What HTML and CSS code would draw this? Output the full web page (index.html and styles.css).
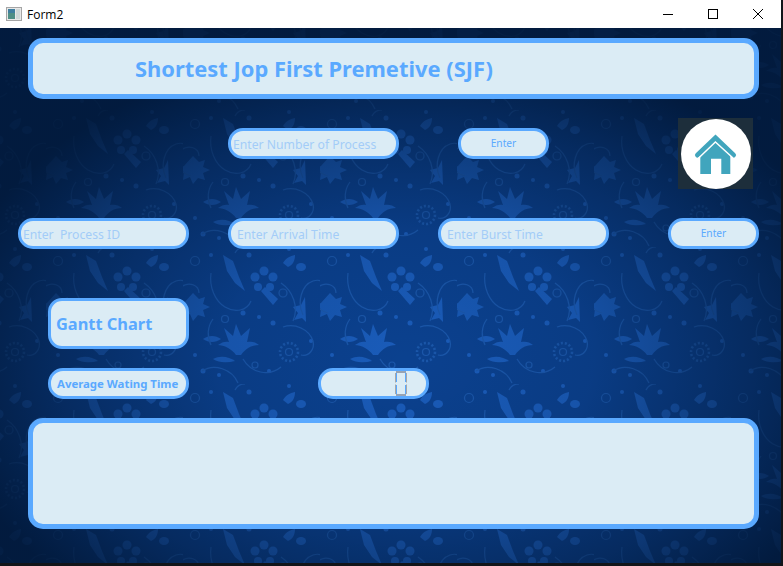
FILE: index.html
```html
<!DOCTYPE html>
<html lang="en">
<head>
    <meta charset="UTF-8">
    <title>Form2</title>
    <link rel="stylesheet" href="styles.css">
</head>
<body>
<div class="window">
    <div class="titlebar">
        <svg class="app_icon" width="16" height="15" viewBox="0 0 16 15">
            <rect x="0.5" y="0.5" width="15" height="13" fill="#e8e8e8" stroke="#a5a5a5"/>
            <rect x="2" y="2" width="7" height="10" fill="#4f8f86"/>
            <rect x="2" y="2" width="7" height="4" fill="#3f7fa0"/>
            <rect x="10" y="2" width="4" height="10" fill="#cfd8d8"/>
        </svg>
        <span class="titlebar_text">Form2</span>
        <div class="win_btns">
            <svg width="10" height="10" viewBox="0 0 10 10"><path d="M0 5.5H10" stroke="#000" fill="none"/></svg>
            <svg width="10" height="10" viewBox="0 0 10 10"><rect x="0.5" y="0.5" width="9" height="9" stroke="#000" fill="none"/></svg>
            <svg width="10" height="10" viewBox="0 0 10 10"><path d="M0 0L10 10M10 0L0 10" stroke="#000" fill="none"/></svg>
        </div>
    </div>
    <div class="form">
        <svg class="wallpaper" width="781" height="535">
            <defs>
                <pattern id="floral" width="137" height="137" patternUnits="userSpaceOnUse" patternTransform="translate(46 82)">
                    <g fill="#1a5cba">
                        <!-- flower -->
                        <circle cx="81" cy="24" r="4.5"/>
                        <circle cx="90" cy="30" r="4.5"/>
                        <circle cx="87" cy="40" r="4"/>
                        <circle cx="75" cy="40" r="4"/>
                        <circle cx="72" cy="30" r="4.5"/>
                        <path d="M82 40L95 52L90 58L78 44Z"/>
                        <!-- feather -->
                        <path d="M40 8L50 14L56 30L62 44L52 36L44 24Z"/>
                        <!-- spiky curl -->
                        <path d="M10 46l6 6l6 -2l-2 7l7 3l-7 3l2 7l-7 -2l-5 6l-3 -7l-7 3l1 -8l-7 -3l7 -3z" opacity="0.9"/>
                        <path d="M122 50l-4 8l-8 2l5 6l-4 7l8 -2l4 4z"/>
                        <!-- lotus -->
                        <path d="M53 108c-4 -6 -12 -10 -18 -10c4 -3 8 -4 11 -3l-5 -14l9 8l3 -12l5 12l9 -8l-3 14c4 -1 9 0 12 3c-8 0 -14 4 -18 10z"/>
                        <path d="M30 112c8 -4 16 -2 22 2c-8 2 -16 2 -22 -2z"/>
                        <!-- small leaves and dots -->
                        <path d="M20 92c6 -4 12 -4 18 0c-6 4 -12 4 -18 0z"/>
                        <path d="M100 16c3 -5 7 -7 12 -8c0 5 -2 10 -7 12z"/>
                        <ellipse cx="118" cy="20" rx="5" ry="4"/>
                        <circle cx="66" cy="8" r="2.5"/>
                        <circle cx="106" cy="2" r="2"/>
                        <circle cx="60" cy="66" r="2.5"/>
                        <circle cx="76" cy="70" r="2"/>
                        <circle cx="90" cy="76" r="2.5"/>
                        <circle cx="12" cy="108" r="2"/>
                        <circle cx="20" cy="124" r="2.5"/>
                        <circle cx="128" cy="94" r="2"/>
                        <circle cx="36" cy="128" r="2"/>
                        <circle cx="86" cy="124" r="2"/>
                        <circle cx="28" cy="8" r="2"/>
                    </g>
                    <g fill="none" stroke="#1a57ab" stroke-width="1.2">
                        <!-- circle flower -->
                        <circle cx="106" cy="105" r="9" stroke-dasharray="2 2" stroke-width="2.5"/>
                        <circle cx="106" cy="105" r="3.5"/>
                        <path d="M8 66c-14 -4 -20 -18 -10 -26c8 -6 18 -2 18 6"/>
                        <path d="M120 68c-6 -12 -2 -30 10 -34c6 -2 12 0 14 6"/>
                        <path d="M55 136c-6 -14 -24 -20 -36 -12"/>
                        <path d="M60 112c8 14 26 18 38 8"/>
                        <path d="M100 80c12 -4 26 2 30 14c2 8 -4 16 -12 14"/>
                        <path d="M28 26c-2 14 4 28 14 34c10 6 22 4 26 -6"/>
                        <path d="M98 36c12 8 18 24 12 38"/>
                        <path d="M62 0c-4 -0 -8 2 -10 6"/>
                        <path d="M30 72c-6 8 -6 18 -2 26"/>
                        <circle cx="42" cy="72" r="3.5"/>
                        <circle cx="100" cy="46" r="4"/>
                        <circle cx="12" cy="14" r="4.5"/>
                        <circle cx="72" cy="118" r="3"/>
                    </g>
                </pattern>
                <radialGradient id="vignette" cx="52%" cy="62%" r="60%">
                    <stop offset="0" stop-color="#001430" stop-opacity="0"/>
                    <stop offset="0.4" stop-color="#001430" stop-opacity="0.12"/>
                    <stop offset="0.75" stop-color="#001430" stop-opacity="0.5"/>
                    <stop offset="1" stop-color="#001430" stop-opacity="0.85"/>
                </radialGradient>
            </defs>
            <rect width="781" height="535" fill="#0b418f"/>
            <rect width="781" height="535" fill="url(#floral)"/>
            <rect width="781" height="535" fill="url(#vignette)"/>
        </svg>

        <div class="heading">Shortest Jop First Premetive (SJF)</div>

        <div class="row row_top">
            <input class="field field_first" type="text" placeholder="Enter Number of Process">
            <button class="enter_btn enter_first">Enter</button>
            <svg class="home" width="75" height="71" viewBox="0 0 75 71">
                <rect width="75" height="71" fill="#1d2e3b"/>
                <circle cx="38" cy="36" r="35" fill="#fff"/>
                <path d="M22.3 56V34L37.5 22L52.3 34V56H43.3V40.7H33V56Z" fill="#41a5bd"/>
                <path d="M19.5 37L37.5 20L55.5 37" fill="none" stroke="#41a5bd" stroke-width="5" stroke-linecap="round"/>
                <path d="M20.7 40L37.4 24L55 40" fill="none" stroke="#fff" stroke-width="1.5"/>
            </svg>
        </div>

        <div class="row row_process">
            <input class="field field_id" type="text" placeholder="Enter  Process ID">
            <input class="field" type="text" placeholder="Enter Arrival Time">
            <input class="field" type="text" placeholder="Enter Burst Time">
            <button class="enter_btn enter_second">Enter</button>
        </div>

        <div class="label gantt">Gantt Chart</div>

        <div class="row row_avg">
            <div class="label avg">Average Wating Time</div>
            <div class="lcd">
                <svg width="12" height="25" viewBox="0 0 12 25">
                    <path d="M1 1H11M1 24H11" stroke="#97a3b3" stroke-width="2" fill="none"/>
                    <path d="M0.5 2V11.5M0.5 13.5V23M11.5 2V11.5M11.5 13.5V23" stroke="#a8a8a8" fill="none"/>
                    <path d="M1.5 2V11M1.5 14V23M10.5 2V11M10.5 14V23" stroke="#5aa9ff" fill="none"/>
                </svg>
            </div>
        </div>

        <div class="chart"></div>
    </div>
</div>
</body>
</html>
```

FILE: styles.css
```css
*{
    margin: 0;
    padding: 0;
    box-sizing: border-box;
}

body{
    width: 783px;
    height: 566px;
    overflow: hidden;
    background-color: #12151a;
    font-family: "Noto Sans", "DejaVu Sans", sans-serif;
}

.window{
    width: 781px;
    height: 563px;
    display: flex;
    flex-direction: column;
}

.titlebar{
    height: 28px;
    flex: none;
    background-color: #fff;
    display: flex;
    align-items: center;
    padding-left: 6px;
    width: 781px;
}

.app_icon{
    margin-right: 5px;
}

.titlebar_text{
    font-family: "Open Sans", sans-serif;
    font-size: 12px;
    color: #000;
}

.win_btns{
    margin-left: auto;
    display: flex;
    gap: 35px;
    padding-right: 18px;
}

.form{
    position: relative;
    flex: 1;
    padding: 10px 0 0 18px;
    overflow: hidden;
}

.wallpaper{
    position: absolute;
    left: 0;
    top: 0;
}

.heading, .row, .gantt, .chart{
    position: relative;
}

.heading{
    width: 731px;
    height: 61px;
    margin-left: 10px;
    padding: 0 0 0 102px;
    border: 5px solid #5aa9ff;
    border-radius: 15px;
    background-color: #dbecf5;
    color: #5aa9ff;
    font-size: 21.9px;
    font-weight: 700;
    line-height: 51px;
}

.row{
    display: flex;
    align-items: flex-start;
}

.row_top{
    margin-top: 19px;
    height: 71px;
    padding-left: 210px;
}

.row_process{
    margin-top: 29px;
    gap: 39px;
}

.field, .enter_btn, .label, .lcd{
    height: 31px;
    border: 3px solid #5aa9ff;
    border-radius: 15px;
    background-color: #dbecf5;
    font-family: inherit;
    outline: none;
}

.field{
    width: 171px;
    padding: 2px 0 0 6px;
    font-size: 12.2px;
}

.field::placeholder{
    color: #a3ccf8;
    opacity: 1;
}

.field_first, .field_id{
    padding-left: 2px;
}

.field_first{
    margin-top: 10px;
}

.enter_btn{
    width: 91px;
    padding-bottom: 2px;
    color: #5aa9ff;
    font-size: 10.2px;
}

.enter_first{
    margin: 10px 0 0 59px;
}

.home{
    margin-left: 129px;
}

.enter_second{
    margin-left: 20px;
}

.label{
    color: #5aa9ff;
    font-weight: 700;
}

.gantt{
    width: 141px;
    height: 51px;
    margin: 49px 0 0 30px;
    padding-left: 5px;
    border-radius: 14px;
    font-size: 16.4px;
    line-height: 45px;
}

.row_avg{
    margin: 19px 0 0 30px;
}

.avg{
    width: 141px;
    padding-left: 6px;
    font-size: 11.4px;
    line-height: 25px;
    white-space: nowrap;
}

.lcd{
    width: 111px;
    margin-left: 129px;
    padding-right: 19px;
    display: flex;
    justify-content: flex-end;
    align-items: center;
}

.chart{
    width: 731px;
    height: 111px;
    margin: 19px 0 0 10px;
    border: 5px solid #5aa9ff;
    border-radius: 15px;
    background-color: #dbecf5;
}
```
